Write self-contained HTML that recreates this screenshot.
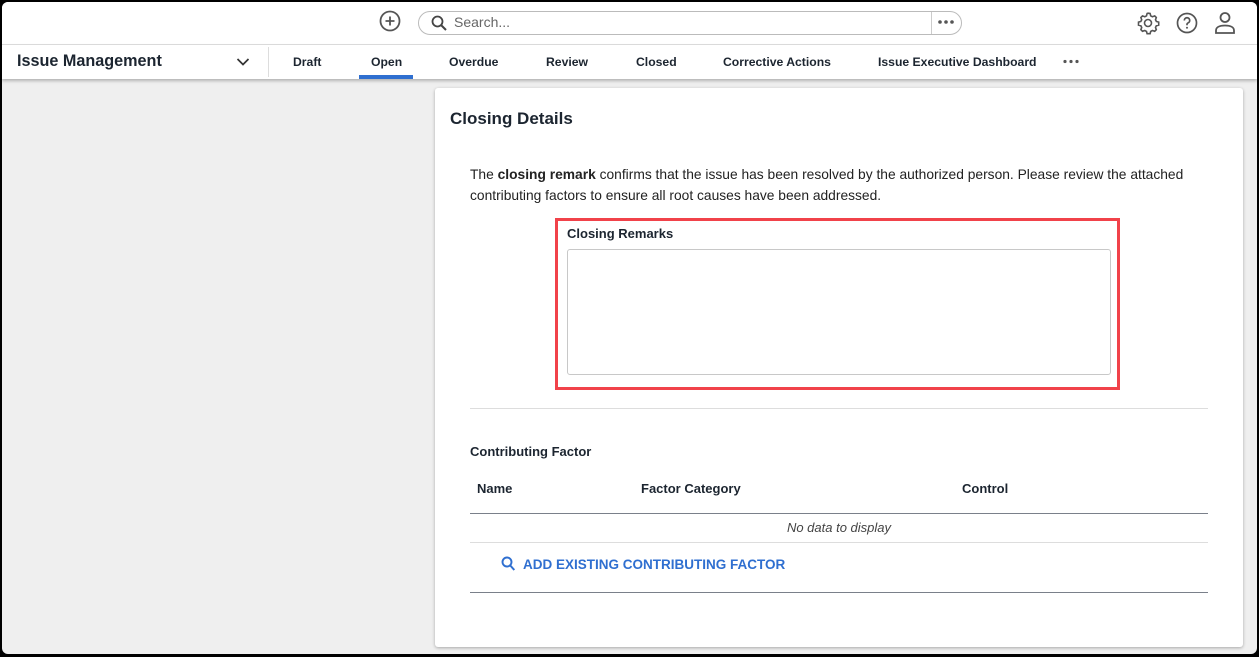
<!DOCTYPE html>
<html><head><style>
*{box-sizing:border-box;margin:0;padding:0}
body{width:1259px;height:657px;background:#000;font-family:"Liberation Sans",sans-serif;color:#1c2530;position:relative;overflow:hidden}
.frame{position:absolute;left:2px;top:2px;width:1255px;height:652px;background:#efefef;border-radius:6px;overflow:hidden}
.top{position:absolute;left:0;top:0;width:100%;height:43px;background:#fff;border-bottom:1px solid #ddd}
.nav{position:absolute;left:0;top:43px;width:100%;height:34px;background:#fff;box-shadow:0 2px 3px rgba(0,0,0,.25)}
.abs{position:absolute}
.tab{position:absolute;top:10px;font-size:12.2px;font-weight:bold;color:#1c2530}
.card{position:absolute;left:433px;top:86px;width:808px;height:559px;background:#fff;border-radius:3px;box-shadow:0 1px 3px rgba(0,0,0,.3)}
</style></head><body>
<div class="frame">
 <div class="top">
  <svg class="abs" style="left:377px;top:8px" width="22" height="22" viewBox="0 0 22 22"><circle cx="11" cy="11" r="9.5" fill="none" stroke="#555" stroke-width="1.8"/><path d="M11 6.5v9M6.5 11h9" stroke="#555" stroke-width="1.8"/></svg>
  <div class="abs" style="left:416px;top:9px;width:544px;height:24px;border:1px solid #bbb;border-radius:12px"></div>
  <div class="abs" style="left:929px;top:10px;width:1px;height:22px;background:#ccc"></div>
  <svg class="abs" style="left:429px;top:13px" width="16" height="16" viewBox="0 0 16 16"><circle cx="6.5" cy="6.5" r="5" fill="none" stroke="#444" stroke-width="1.8"/><path d="M10 10l5 5" stroke="#444" stroke-width="2"/></svg>
  <div class="abs" style="left:452px;top:12px;font-size:14px;color:#666">Search...</div>
  <svg class="abs" style="left:935px;top:17px" width="18" height="6" viewBox="0 0 18 6"><circle cx="3" cy="3" r="1.8" fill="#555"/><circle cx="9" cy="3" r="1.8" fill="#555"/><circle cx="15" cy="3" r="1.8" fill="#555"/></svg>
  <svg class="abs" style="left:1134px;top:9px" width="24" height="24" viewBox="0 0 24 24"><path d="M12 2.2l2.1.3.6 2.3 1.7.9 2.3-.8 1.6 1.6-.8 2.3.9 1.7 2.3.6v3l-2.3.6-.9 1.7.8 2.3-1.6 1.6-2.3-.8-1.7.9-.6 2.3h-3l-.6-2.3-1.7-.9-2.3.8-1.6-1.6.8-2.3-.9-1.7-2.3-.6v-3l2.3-.6.9-1.7-.8-2.3 1.6-1.6 2.3.8 1.7-.9.6-2.3z" fill="none" stroke="#555" stroke-width="1.6"/><circle cx="12" cy="12" r="3.5" fill="none" stroke="#555" stroke-width="1.6"/></svg>
  <svg class="abs" style="left:1174px;top:10px" width="22" height="22" viewBox="0 0 22 22"><circle cx="11" cy="11" r="9.5" fill="none" stroke="#555" stroke-width="1.7"/><path d="M8.3 8.5a2.7 2.7 0 1 1 3.6 2.5c-.6.3-.9.7-.9 1.4v.8" fill="none" stroke="#555" stroke-width="1.7"/><circle cx="11" cy="15.8" r="1" fill="#555"/></svg>
  <svg class="abs" style="left:1212px;top:9px" width="22" height="24" viewBox="0 0 22 24"><circle cx="11" cy="6.5" r="4.5" fill="none" stroke="#555" stroke-width="1.8"/><path d="M2 22v-2.5c0-3 3-5 9-5s9 2 9 5V22z" fill="none" stroke="#555" stroke-width="1.8"/></svg>
 </div>
 <div class="nav">
  <div class="abs" style="left:15px;top:7px;font-size:16.2px;font-weight:bold">Issue Management</div>
  <svg class="abs" style="left:234px;top:12px" width="14" height="10" viewBox="0 0 14 10"><path d="M1.5 2l5.5 5.5L12.5 2" fill="none" stroke="#333" stroke-width="1.7"/></svg>
  <div class="abs" style="left:266px;top:2px;width:1px;height:30px;background:#ddd"></div>
  <div class="tab" style="left:291px">Draft</div>
  <div class="tab" style="left:369px">Open</div>
  <div class="abs" style="left:357px;top:30px;width:54px;height:4px;background:#2f6fd0"></div>
  <div class="tab" style="left:447px">Overdue</div>
  <div class="tab" style="left:544px">Review</div>
  <div class="tab" style="left:634px">Closed</div>
  <div class="tab" style="left:721px">Corrective Actions</div>
  <div class="tab" style="left:876px">Issue Executive Dashboard</div>
  <svg class="abs" style="left:1060px;top:14px" width="18" height="5" viewBox="0 0 18 5"><circle cx="3" cy="2.5" r="1.6" fill="#555"/><circle cx="9" cy="2.5" r="1.6" fill="#555"/><circle cx="15" cy="2.5" r="1.6" fill="#555"/></svg>
 </div>
 <div class="card">
  <div class="abs" style="left:15px;top:21px;font-size:17px;font-weight:bold">Closing Details</div>
  <div class="abs" style="left:35px;top:76px;width:760px;font-size:13.8px;line-height:21px;color:#222">The <b>closing remark</b> confirms that the issue has been resolved by the authorized person. Please review the attached contributing factors to ensure all root causes have been addressed.</div>
  <div class="abs" style="left:120px;top:130px;width:565px;height:172px;border:3px solid #f1424a"></div>
  <div class="abs" style="left:132px;top:138px;font-size:13px;font-weight:bold">Closing Remarks</div>
  <div class="abs" style="left:132px;top:161px;width:544px;height:126px;border:1px solid #c8c8c8;border-radius:3px"></div>
  <div class="abs" style="left:35px;top:320px;width:738px;height:1px;background:#ddd"></div>
  <div class="abs" style="left:35px;top:356px;font-size:13px;font-weight:bold">Contributing Factor</div>
  <div class="abs" style="left:42px;top:393px;font-size:13px;font-weight:bold">Name</div>
  <div class="abs" style="left:206px;top:393px;font-size:13px;font-weight:bold">Factor Category</div>
  <div class="abs" style="left:527px;top:393px;font-size:13px;font-weight:bold">Control</div>
  <div class="abs" style="left:35px;top:425px;width:738px;height:1px;background:#7a808a"></div>
  <div class="abs" style="left:35px;top:432px;width:738px;text-align:center;font-size:13px;font-style:italic;color:#444">No data to display</div>
  <div class="abs" style="left:35px;top:454px;width:738px;height:1px;background:#ddd"></div>
  <svg class="abs" style="left:66px;top:468px" width="15" height="16" viewBox="0 0 15 16"><circle cx="6" cy="6" r="4.5" fill="none" stroke="#2f6fd0" stroke-width="1.9"/><path d="M9.3 9.5l4 4.5" stroke="#2f6fd0" stroke-width="2"/></svg>
  <div class="abs" style="left:88px;top:469px;font-size:13.5px;font-weight:bold;color:#2f6fd0">ADD EXISTING CONTRIBUTING FACTOR</div>
  <div class="abs" style="left:35px;top:504px;width:738px;height:1px;background:#7a808a"></div>
 </div>
</div>
</body></html>
